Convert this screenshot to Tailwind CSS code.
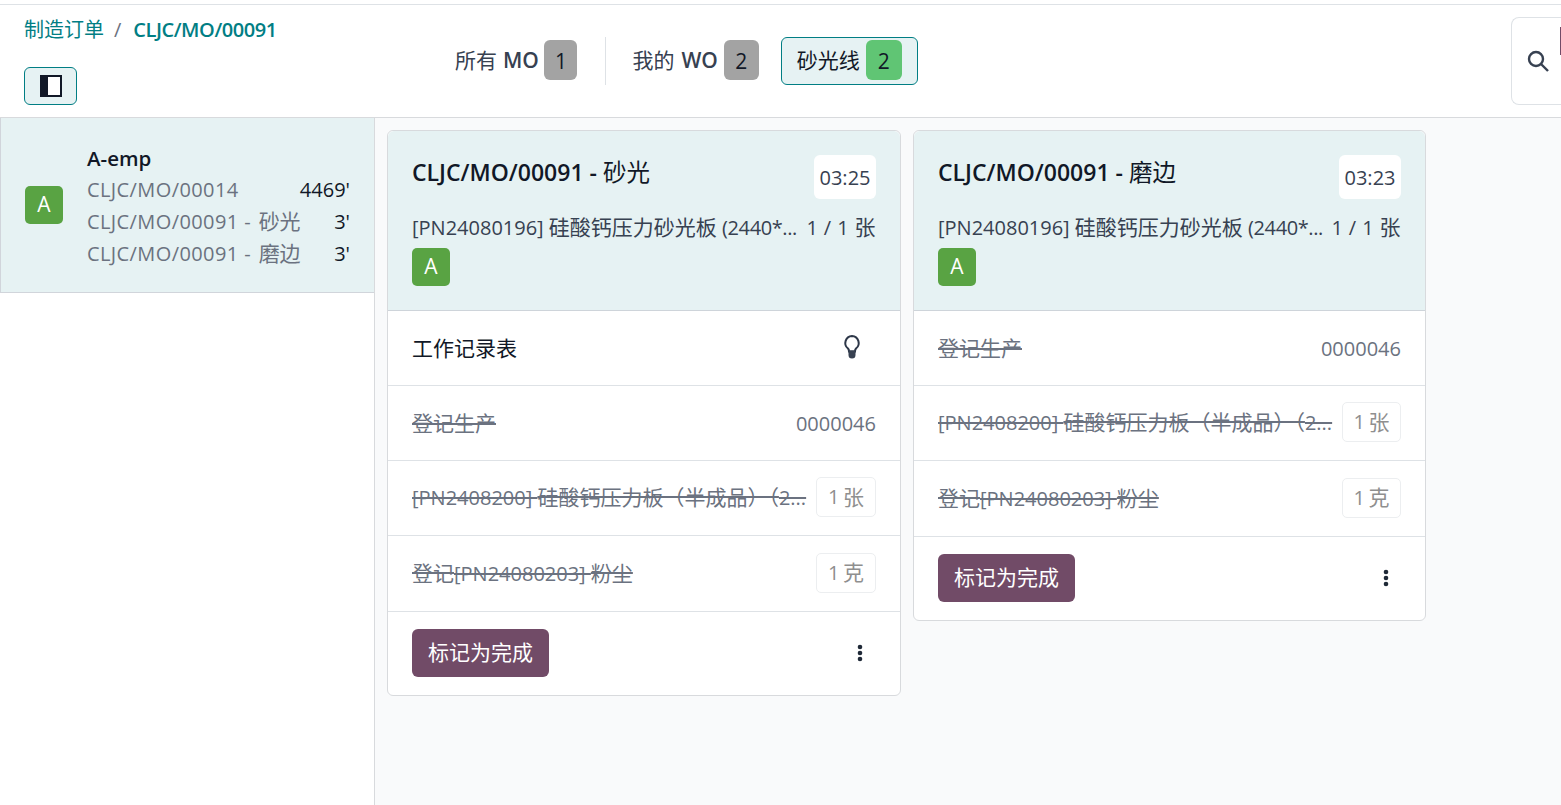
<!DOCTYPE html>
<html lang="zh">
<head>
<meta charset="utf-8">
<script src="https://cdn.jsdelivr.net/npm/@tailwindcss/browser@4"></script>
</head>
<body class="h-[805px] w-[1561px] overflow-hidden bg-white font-['Open_Sans','Noto_Sans_CJK_SC',sans-serif] text-[20px] text-[#374151]">
<div class="h-[5px] border-b border-[#dee2e6] bg-white"></div>
<header class="flex h-[113px] border-b border-[#d8dadd] bg-white">
  <div class="w-[430px] shrink-0 pl-6 pt-[10px]">
    <div class="flex h-[30px] items-center text-[20px] text-[#017e84]">
      <span>制造订单</span><span class="ml-[10px] mr-3 text-[#6b7280]">/</span><span class="font-semibold tracking-[-0.45px]">CLJC/MO/00091</span>
    </div>
    <button class="mt-[22px] flex h-[38px] w-[53px] items-center justify-center rounded-[6px] border border-[#017e84] bg-[#e6f2f3]">
      <svg width="22" height="22" viewBox="0 0 22 22"><rect x="1" y="1" width="20" height="20" fill="#fff" stroke="#111827" stroke-width="2"/><rect x="1" y="1" width="7" height="20" fill="#111827"/></svg>
    </button>
  </div>
  <nav class="flex items-start pt-[32px]">
    <div class="ml-[25px] flex h-12 items-center">
      <span class="text-[21px]">所有</span><span class="ml-[6px] text-[21px] font-semibold">MO</span><span class="ml-[5.500px] mb-[2px] flex h-10 w-[33px] items-center justify-center rounded-[6px] bg-[#a3a3a3] pt-1 text-[21px] text-[#111827]">1</span>
    </div>
    <div class="ml-7 mr-[26px] h-12 w-px bg-[#dee2e6]"></div>
    <div class="flex h-12 items-center">
      <span class="text-[21px]">我的</span><span class="ml-[7px] text-[21px] font-semibold">WO</span><span class="ml-[6px] mb-[2px] flex h-10 w-[35px] items-center justify-center rounded-[6px] bg-[#a3a3a3] pt-1 text-[21px] text-[#111827]">2</span>
    </div>
    <div class="ml-[22px] flex h-12 items-center rounded-[6px] border border-[#017e84] bg-[#e6f2f3] pl-[15px] pr-[15px] text-[#111827]">
      <span class="text-[21px]">砂光线</span><span class="ml-[6px] mb-[2px] flex h-10 w-9 items-center justify-center rounded-[6px] bg-[#60c574] pt-1 text-[21px]">2</span>
    </div>
  </nav>
  <div class="relative ml-auto mt-3 flex h-[88px] w-[50px] items-center rounded-l-[8px] border border-r-0 border-[#dee2e6] pl-[15px]">
    <svg width="22" height="22" viewBox="0 0 22 22" fill="none" stroke="#374151" stroke-width="2.4"><circle cx="9" cy="9" r="7"/><path d="M14 14l7 7"/></svg>
    <span class="absolute right-0 top-[9px] h-7 w-px bg-[#714b67]"></span>
  </div>
</header>
<div class="flex h-[687px]">
  <aside class="w-[375px] shrink-0 border-r border-[#d8dadd] bg-white">
    <div class="flex h-[175px] items-center border-b border-l border-[#d1d5db] bg-[#e6f2f3] px-6">
      <span class="flex h-[38px] w-[38px] shrink-0 items-center justify-center rounded-[5px] bg-[#59a343] text-[21px] text-white">A</span>
      <div class="ml-6 flex-1 pt-[2px]">
        <div class="h-8 text-[20.500px] font-semibold leading-8 text-[#111827]">A-emp</div>
        <div class="flex h-8 justify-between leading-8"><span class="tracking-[0.4px] text-[#6b7280]">CLJC/MO/00014</span><span class="text-[#111827]">4469'</span></div>
        <div class="flex h-8 justify-between leading-8"><span class="tracking-[0.4px] text-[#6b7280]">CLJC/MO/00091 - <span class="ml-[2px] text-[21px] leading-none tracking-normal">砂光</span></span><span class="text-[#111827]">3'</span></div>
        <div class="flex h-8 justify-between leading-8"><span class="tracking-[0.4px] text-[#6b7280]">CLJC/MO/00091 - <span class="ml-[2px] text-[21px] leading-none tracking-normal">磨边</span></span><span class="text-[#111827]">3'</span></div>
      </div>
    </div>
  </aside>
  <main class="flex flex-1 items-start gap-3 bg-[#f9fafb] pl-3 pt-3">
    <section class="w-[514px] rounded-[6px] border border-[#d8dadd] bg-white">
      <div class="h-[180px] rounded-t-[6px] border-b border-[#ced4da] bg-[#e6f2f3] px-6 pt-6">
        <div class="flex justify-between">
          <span class="mt-[1px] text-[23px] font-semibold leading-8 text-[#111827]">CLJC/MO/00091 - <span class="text-[23.500px] font-normal leading-none">砂光</span></span>
          <span class="flex h-[44px] w-[62px] items-center justify-center rounded-[6px] bg-white pt-[2px]">03:25</span>
        </div>
        <div class="mt-[13px] flex h-8 justify-between leading-8"><span>[PN24080196] <span class="text-[21px] leading-none">硅酸钙压力砂光板</span> <span class="tracking-[-0.4px]">(2440*...</span></span><span class="tracking-[0.4px]">1 / 1 <span class="text-[21px] leading-none">张</span></span></div>
        <span class="mt-1 flex h-[38px] w-[38px] items-center justify-center rounded-[5px] bg-[#59a343] text-[21px] text-white">A</span>
      </div>
      <div class="flex h-[75px] items-center justify-between border-b border-[#dee2e6] pl-6 pr-[39px] text-[#111827]">
        <span class="pt-[2px] text-[21px]">工作记录表</span>
        <svg width="18" height="25" viewBox="0 0 18 25" class="mb-1"><path d="M9 2a7 7 0 0 0-4 12.500c1 1 1 2 1 3h6c0-1 0-2 1-3A7 7 0 0 0 9 2z" fill="#fff" stroke="#2d3748" stroke-width="2"/><path d="M5.500 16.500h7V21a3.500 3.500 0 0 1-7 0z" fill="#374151"/></svg>
      </div>
      <div class="flex h-[75px] items-center justify-between border-b border-[#dee2e6] px-6 pt-[2px] text-[#6b7280]"><span class="text-[21px] line-through decoration-2">登记生产</span><span>0000046</span></div>
      <div class="flex h-[75px] items-center justify-between border-b border-[#dee2e6] px-6 text-[#6b7280]"><span class="line-through decoration-2">[PN2408200] <span class="text-[21px] leading-none">硅酸钙压力板（半成品）（</span>2...</span><span class="mb-[2px] flex h-10 w-[60px] items-center justify-center rounded-[5px] border border-[#eceef0] text-[#8f8f8f]">1&#8201;<span class="text-[21px] leading-none">张</span></span></div>
      <div class="flex h-[76px] items-center justify-between border-b border-[#dee2e6] px-6 text-[#6b7280]"><span class="line-through decoration-2"><span class="text-[21px] leading-none">登记</span>[PN24080203] <span class="text-[21px] leading-none">粉尘</span></span><span class="mb-[2px] flex h-10 w-[60px] items-center justify-center rounded-[5px] border border-[#eceef0] text-[#8f8f8f]">1&#8201;<span class="text-[21px] leading-none">克</span></span></div>
      <div class="flex h-[83px] items-center justify-between pl-6 pr-[37px]">
        <button class="mt-[-1px] h-12 w-[137px] rounded-[6px] bg-[#714b67] text-[21px] text-white">标记为完成</button>
        <svg width="6" height="18" viewBox="0 0 6 18" fill="#1f2937" class="mb-[2px]"><circle cx="3" cy="3" r="2.300"/><circle cx="3" cy="9" r="2.300"/><circle cx="3" cy="15" r="2.300"/></svg>
      </div>
    </section>
    <section class="w-[513px] rounded-[6px] border border-[#d8dadd] bg-white">
      <div class="h-[180px] rounded-t-[6px] border-b border-[#ced4da] bg-[#e6f2f3] px-6 pt-6">
        <div class="flex justify-between">
          <span class="mt-[1px] text-[23px] font-semibold leading-8 text-[#111827]">CLJC/MO/00091 - <span class="text-[23.500px] font-normal leading-none">磨边</span></span>
          <span class="flex h-[44px] w-[62px] items-center justify-center rounded-[6px] bg-white pt-[2px]">03:23</span>
        </div>
        <div class="mt-[13px] flex h-8 justify-between leading-8"><span>[PN24080196] <span class="text-[21px] leading-none">硅酸钙压力砂光板</span> <span class="tracking-[-0.4px]">(2440*...</span></span><span class="tracking-[0.4px]">1 / 1 <span class="text-[21px] leading-none">张</span></span></div>
        <span class="mt-1 flex h-[38px] w-[38px] items-center justify-center rounded-[5px] bg-[#59a343] text-[21px] text-white">A</span>
      </div>
      <div class="flex h-[75px] items-center justify-between border-b border-[#dee2e6] px-6 pt-[2px] text-[#6b7280]"><span class="text-[21px] line-through decoration-2">登记生产</span><span>0000046</span></div>
      <div class="flex h-[75px] items-center justify-between border-b border-[#dee2e6] px-6 text-[#6b7280]"><span class="line-through decoration-2">[PN2408200] <span class="text-[21px] leading-none">硅酸钙压力板（半成品）（</span>2...</span><span class="mb-[2px] flex h-10 w-[59px] items-center justify-center rounded-[5px] border border-[#eceef0] text-[#8f8f8f]">1&#8201;<span class="text-[21px] leading-none">张</span></span></div>
      <div class="flex h-[76px] items-center justify-between border-b border-[#dee2e6] px-6 text-[#6b7280]"><span class="line-through decoration-2"><span class="text-[21px] leading-none">登记</span>[PN24080203] <span class="text-[21px] leading-none">粉尘</span></span><span class="mb-[2px] flex h-10 w-[59px] items-center justify-center rounded-[5px] border border-[#eceef0] text-[#8f8f8f]">1&#8201;<span class="text-[21px] leading-none">克</span></span></div>
      <div class="flex h-[83px] items-center justify-between pl-6 pr-9">
        <button class="mt-[-1px] h-12 w-[137px] rounded-[6px] bg-[#714b67] text-[21px] text-white">标记为完成</button>
        <svg width="6" height="18" viewBox="0 0 6 18" fill="#1f2937" class="mb-[2px]"><circle cx="3" cy="3" r="2.300"/><circle cx="3" cy="9" r="2.300"/><circle cx="3" cy="15" r="2.300"/></svg>
      </div>
    </section>
  </main>
</div>
</body>
</html>
